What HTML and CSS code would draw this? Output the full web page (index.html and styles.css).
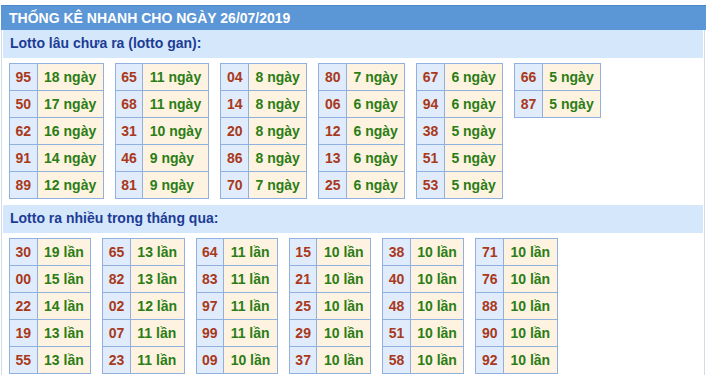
FILE: index.html
```html
<!DOCTYPE html>
<html lang="vi">
<head>
<meta charset="utf-8">
<link rel="stylesheet" href="styles.css">
</head>
<body>
<div class="box">
  <div class="title">THỐNG KÊ NHANH CHO NGÀY 26/07/2019</div>
  <div class="content">
    <div class="sub">Lotto lâu chưa ra (lotto gan):</div>
    <div class="tables gan">
      <table><tr><td class="n">95</td><td class="v">18 ngày</td></tr><tr><td class="n">50</td><td class="v">17 ngày</td></tr><tr><td class="n">62</td><td class="v">16 ngày</td></tr><tr><td class="n">91</td><td class="v">14 ngày</td></tr><tr><td class="n">89</td><td class="v">12 ngày</td></tr></table>
      <table><tr><td class="n">65</td><td class="v">11 ngày</td></tr><tr><td class="n">68</td><td class="v">11 ngày</td></tr><tr><td class="n">31</td><td class="v">10 ngày</td></tr><tr><td class="n">46</td><td class="v">9 ngày</td></tr><tr><td class="n">81</td><td class="v">9 ngày</td></tr></table>
      <table><tr><td class="n">04</td><td class="v">8 ngày</td></tr><tr><td class="n">14</td><td class="v">8 ngày</td></tr><tr><td class="n">20</td><td class="v">8 ngày</td></tr><tr><td class="n">86</td><td class="v">8 ngày</td></tr><tr><td class="n">70</td><td class="v">7 ngày</td></tr></table>
      <table><tr><td class="n">80</td><td class="v">7 ngày</td></tr><tr><td class="n">06</td><td class="v">6 ngày</td></tr><tr><td class="n">12</td><td class="v">6 ngày</td></tr><tr><td class="n">13</td><td class="v">6 ngày</td></tr><tr><td class="n">25</td><td class="v">6 ngày</td></tr></table>
      <table><tr><td class="n">67</td><td class="v">6 ngày</td></tr><tr><td class="n">94</td><td class="v">6 ngày</td></tr><tr><td class="n">38</td><td class="v">5 ngày</td></tr><tr><td class="n">51</td><td class="v">5 ngày</td></tr><tr><td class="n">53</td><td class="v">5 ngày</td></tr></table>
      <table><tr><td class="n">66</td><td class="v">5 ngày</td></tr><tr><td class="n">87</td><td class="v">5 ngày</td></tr></table>
    </div>
    <div class="sub">Lotto ra nhiều trong tháng qua:</div>
    <div class="tables nhieu">
      <table><tr><td class="n">30</td><td class="v">19 lần</td></tr><tr><td class="n">00</td><td class="v">15 lần</td></tr><tr><td class="n">22</td><td class="v">14 lần</td></tr><tr><td class="n">19</td><td class="v">13 lần</td></tr><tr><td class="n">55</td><td class="v">13 lần</td></tr></table>
      <table><tr><td class="n">65</td><td class="v">13 lần</td></tr><tr><td class="n">82</td><td class="v">13 lần</td></tr><tr><td class="n">02</td><td class="v">12 lần</td></tr><tr><td class="n">07</td><td class="v">11 lần</td></tr><tr><td class="n">23</td><td class="v">11 lần</td></tr></table>
      <table><tr><td class="n">64</td><td class="v">11 lần</td></tr><tr><td class="n">83</td><td class="v">11 lần</td></tr><tr><td class="n">97</td><td class="v">11 lần</td></tr><tr><td class="n">99</td><td class="v">11 lần</td></tr><tr><td class="n">09</td><td class="v">10 lần</td></tr></table>
      <table><tr><td class="n">15</td><td class="v">10 lần</td></tr><tr><td class="n">21</td><td class="v">10 lần</td></tr><tr><td class="n">25</td><td class="v">10 lần</td></tr><tr><td class="n">29</td><td class="v">10 lần</td></tr><tr><td class="n">37</td><td class="v">10 lần</td></tr></table>
      <table><tr><td class="n">38</td><td class="v">10 lần</td></tr><tr><td class="n">40</td><td class="v">10 lần</td></tr><tr><td class="n">48</td><td class="v">10 lần</td></tr><tr><td class="n">51</td><td class="v">10 lần</td></tr><tr><td class="n">58</td><td class="v">10 lần</td></tr></table>
      <table><tr><td class="n">71</td><td class="v">10 lần</td></tr><tr><td class="n">76</td><td class="v">10 lần</td></tr><tr><td class="n">88</td><td class="v">10 lần</td></tr><tr><td class="n">90</td><td class="v">10 lần</td></tr><tr><td class="n">92</td><td class="v">10 lần</td></tr></table>
    </div>
  </div>
</div>
</body>
</html>
```
FILE: styles.css
```css
html, body {
  margin: 0;
  padding: 0;
  background: #ffffff;
}
body {
  font-family: "Liberation Sans", Arial, sans-serif;
  font-size: 14px;
  font-weight: bold;
}
.box {
  margin: 5px 1px 0 1px;
  width: 705px;
}
.title {
  background: #5b96d6;
  border-top: 1px solid #4f86c6;
  height: 24px;
  line-height: 24px;
  color: #ffffff;
  padding-left: 8px;
}
.content {
  border-left: 1px solid #d3dbe6;
  border-right: 1px solid #d3dbe6;
  padding: 0 1px;
  margin-right: 1px;
  height: 345px;
}
.sub {
  background: #d5e8fb;
  color: #1d3c96;
  height: 28px;
  line-height: 27px;
  padding-left: 7px;
}
.tables {
  display: flex;
  align-items: flex-start;
  padding-left: 6px;
  gap: 11px;
}
.gan {
  margin: 5px 0 6px 0;
}
.nhieu {
  margin: 5px 0 0 0;
}
table {
  border-collapse: collapse;
}
td {
  border: 1px solid #90b0e0;
  height: 26px;
  padding: 0;
  line-height: 26px;
  white-space: nowrap;
}
td.n {
  background: #e0ecfb;
  color: #a9391b;
  padding: 0 5.5px;
}
td.v {
  background: #fef3e1;
  color: #2b7d15;
  padding: 0 6.5px;
}
```
